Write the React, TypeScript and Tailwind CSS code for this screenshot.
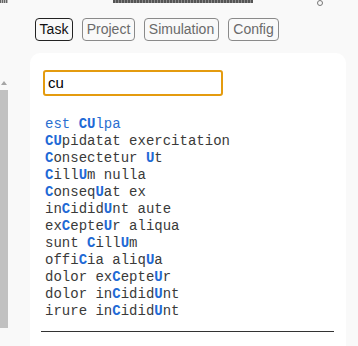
import React from "react";

const items: { text: string; marks: number[] }[] = [
  { text: "est culpa", marks: [4, 5] },
  { text: "cupidatat exercitation", marks: [0, 1] },
  { text: "consectetur ut", marks: [0, 12] },
  { text: "cillum nulla", marks: [0, 4] },
  { text: "consequat ex", marks: [0, 6] },
  { text: "incididunt aute", marks: [2, 7] },
  { text: "excepteur aliqua", marks: [2, 7] },
  { text: "sunt cillum", marks: [5, 9] },
  { text: "officia aliqua", marks: [4, 12] },
  { text: "dolor excepteur", marks: [8, 13] },
  { text: "dolor incididunt", marks: [8, 13] },
  { text: "irure incididunt", marks: [8, 13] },
];

function Row({ text, marks, active }: { text: string; marks: number[]; active: boolean }) {
  return (
    <div className={active ? "text-[#2a6fd0]" : "text-[#3a3a3a]"}>
      {text.split("").map((ch, i) =>
        marks.includes(i) ? (
          <span key={i} className="font-bold uppercase text-[#1f6ad6]">
            {ch}
          </span>
        ) : (
          <span key={i}>{ch}</span>
        )
      )}
    </div>
  );
}

export default function App() {
  const tabs = [
    { label: "Task", w: "w-[38px]", active: true },
    { label: "Project", w: "w-[53px]", active: false },
    { label: "Simulation", w: "w-[75px]", active: false },
    { label: "Config", w: "w-[51px]", active: false },
  ];
  return (
    <div
      className="relative w-[358px] h-[346px] overflow-hidden bg-[#f9f9f9]"
      style={{ fontFamily: '"Liberation Sans", Arial, sans-serif' }}
    >
      {/* top clipped decorations */}
      <div className="absolute left-0 top-0 w-[8px] h-[3px] bg-[repeating-linear-gradient(90deg,#666_0_1px,#bbb_1px_2px)]" />
      <div className="absolute left-[113px] top-0 w-[140px] h-[3px] bg-[repeating-linear-gradient(90deg,#555_0_2px,#8a8a8a_2px_3px)]" />
      <div className="absolute left-[317px] top-[0px] w-[6px] h-[6px] rounded-full border border-[#777]" />

      <div className="flex gap-[9px] pl-[35px] pt-[18px]">
        {tabs.map((t) => (
          <div
            key={t.label}
            className={`${t.w} h-[23px] flex items-center justify-center rounded-[4px] border text-[14px] ${
              t.active
                ? "border-[#222] text-[#111]"
                : "border-[#8a8a8a] text-[#6a6a6a]"
            }`}
          >
            {t.label}
          </div>
        ))}
      </div>

      <div className="flex mt-[12px]">
        <div className="w-[30px] shrink-0 pt-[28px]">
          <div className="w-0 h-0 ml-[1px] border-l-[3.5px] border-r-[3.5px] border-b-[4px] border-l-transparent border-r-transparent border-b-[#a6a6a6]" />
          <div className="mt-[5px] w-[8px] h-[238px] bg-[#c1c1c1]" />
        </div>
        <div className="w-[316px] h-[300px] bg-white rounded-t-[10px] pt-[17px] pl-[13px]">
          <div className="w-[180px] h-[26px] rounded-[3px] border-2 border-[#e49b0f] flex items-center pl-[3px] text-[15px] text-black">
            cu
          </div>
          <div
            className="mt-[20px] pl-[2px] text-[14px] leading-[17px] whitespace-pre"
            style={{ fontFamily: '"Liberation Mono", "Courier New", monospace' }}
          >
            {items.map((t, i) => (
              <Row key={i} text={t.text} marks={t.marks} active={i === 0} />
            ))}
          </div>
          <div className="mt-[11px] -ml-[2px] w-[293px] h-px bg-[#333]" />
        </div>
      </div>
    </div>
  );
}
